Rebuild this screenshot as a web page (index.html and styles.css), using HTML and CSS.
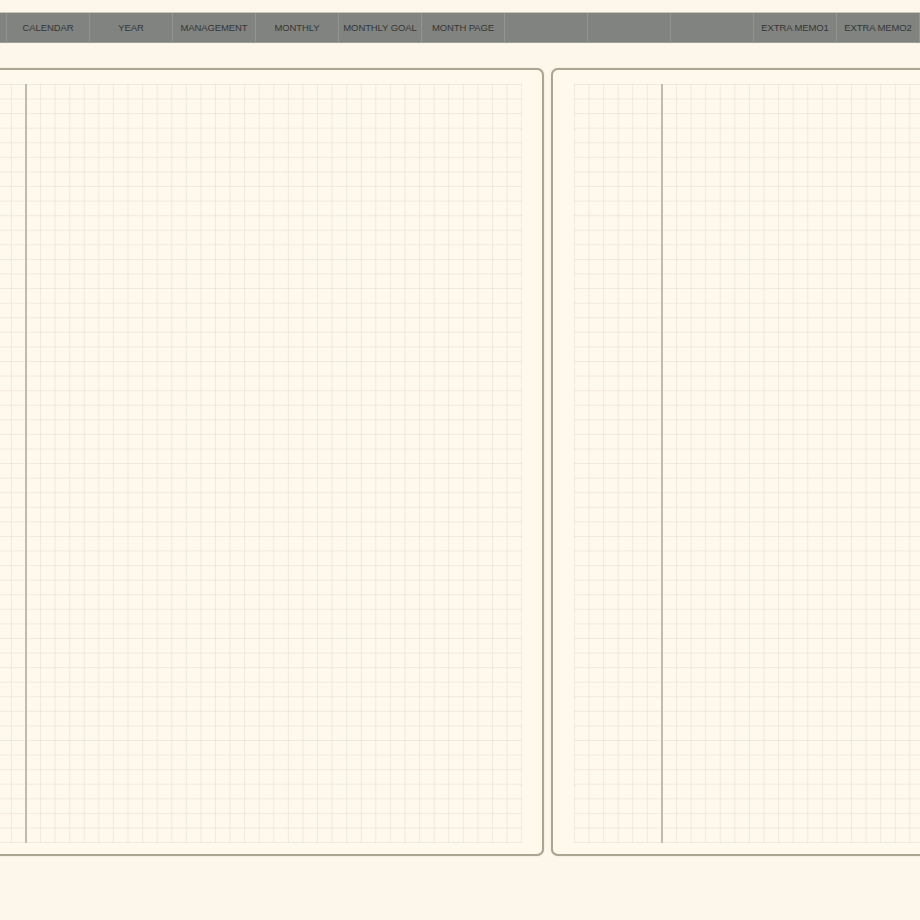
FILE: index.html
```html
<!DOCTYPE html>
<html lang="en">
<head>
    <meta charset="UTF-8">
    <meta name="viewport" content="width=device-width, initial-scale=1.0">
    <title>Planner</title>
    <link rel="stylesheet" href="styles.css">
</head>
<body>

<nav class="tabs">
    <div class="tab"></div>
    <div class="tab">CALENDAR</div>
    <div class="tab">YEAR</div>
    <div class="tab">MANAGEMENT</div>
    <div class="tab">MONTHLY</div>
    <div class="tab">MONTHLY GOAL</div>
    <div class="tab">MONTH PAGE</div>
    <div class="tab"></div>
    <div class="tab"></div>
    <div class="tab"></div>
    <div class="tab">EXTRA MEMO1</div>
    <div class="tab">EXTRA MEMO2</div>
</nav>

<main class="spread">
    <section class="page">
        <div class="grid">
            <div class="margin-line"></div>
        </div>
    </section>
    <section class="page">
        <div class="grid">
            <div class="margin-line"></div>
        </div>
    </section>
</main>

</body>
</html>
```

FILE: styles.css
```css
/* Halaman */
body {
    margin: 0;
    width: 920px;
    height: 920px;
    overflow: hidden;
    background-color: #fdf7eb;
    font-family: "Liberation Sans", Arial, sans-serif;
}

/* Tab navigasi */
.tabs {
    display: flex;
    margin-top: 12px;
    margin-left: -76px;
    height: 31px;
    background-color: #808380;
    border-top: 1px solid #c9c5b3;
    border-bottom: 1px solid #9d9e96;
    box-sizing: border-box;
}

.tab {
    flex: 0 0 83px;
    display: flex;
    align-items: center;
    justify-content: center;
    border-right: 1px solid #92948f;
    box-sizing: border-box;
    font-size: 9.5px;
    letter-spacing: -0.1px;
    color: #363736;
    white-space: nowrap;
}

/* Dua halaman kertas */
.spread {
    display: flex;
    gap: 7px;
    margin-top: 25px;
    margin-left: -85px;
}

.page {
    flex: 0 0 629px;
    height: 788px;
    box-sizing: border-box;
    padding: 14px 20px 11px 21px;
    border: 2px solid #aba692;
    border-radius: 7px;
    background-color: #fef8ed;
    box-shadow: 0 0 1px rgba(90, 85, 70, 0.4);
}

/* Kotak-kotak */
.grid {
    position: relative;
    height: 100%;
    background-image:
        linear-gradient(to right, rgba(205, 198, 180, 0.28) 1px, transparent 1px),
        linear-gradient(to bottom, rgba(205, 198, 180, 0.28) 1px, transparent 1px);
    background-size: 14.58px 14.58px;
}

.margin-line {
    position: absolute;
    top: 0;
    bottom: 0;
    left: 87px;
    width: 1.5px;
    background-color: #bdbaae;
}
```
